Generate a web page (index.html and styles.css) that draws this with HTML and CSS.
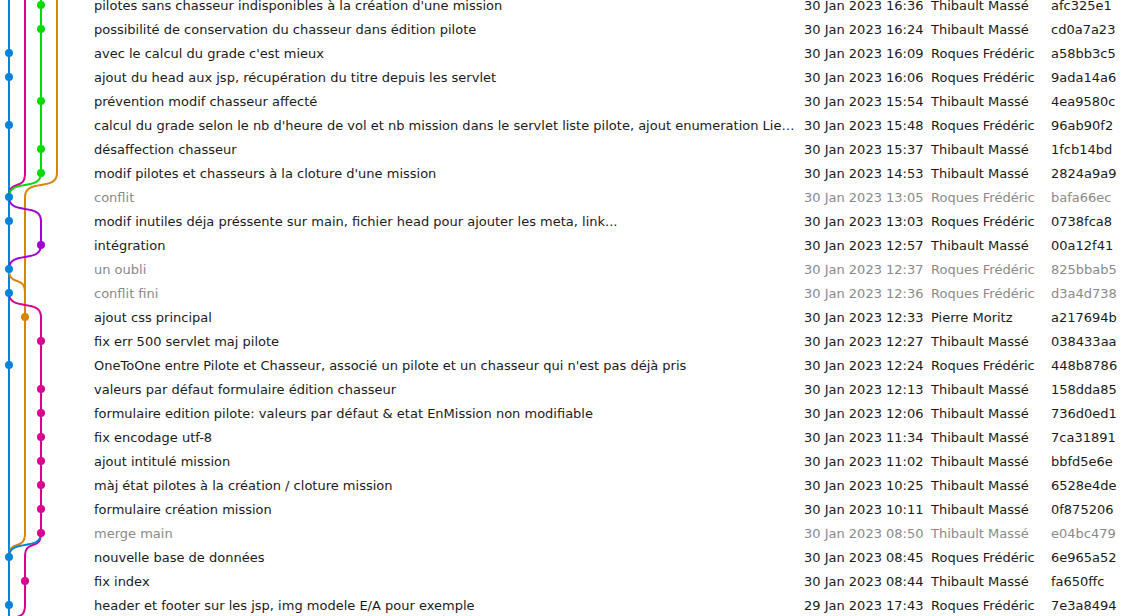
FILE: index.html
```html
<!DOCTYPE html>
<html lang="fr">
<head>
<meta charset="utf-8">
<title>Git Graph</title>
<link rel="stylesheet" href="styles.css">
</head>
<body>
<div class="log">
  <svg class="graph" width="90" height="648" viewBox="0 0 90 648">
    <g class="shadows">
      <path d="M9 0 V648"/>
      <path d="M25 0 V180 C25 199.2 9 184.8 9 204"/>
      <path d="M41 0 V180 C41 199.2 9 184.8 9 204"/>
      <path d="M57 0 V180 C57 199.2 25 184.8 25 204 V540 C25 559.2 9 544.8 9 564"/>
      <path d="M9 204 C9 223.2 41 208.8 41 228 V252 C41 271.2 9 256.8 9 276"/>
      <path d="M9 276 C9 295.2 25 280.8 25 300 V324"/>
      <path d="M9 300 C9 319.2 41 304.8 41 324 V540 C41 559.2 25 544.8 25 564 V612 C25 631.2 9 616.8 9 636"/>
      <path d="M41 540 C41 559.2 9 544.8 9 564"/>
    </g>
    <g class="lines">
      <path class="c-blue" d="M9 0 V648"/>
      <path class="c-magenta" d="M25 0 V180 C25 199.2 9 184.8 9 204"/>
      <path class="c-green" d="M41 0 V180 C41 199.2 9 184.8 9 204"/>
      <path class="c-orange" d="M57 0 V180 C57 199.2 25 184.8 25 204 V540 C25 559.2 9 544.8 9 564"/>
      <path class="c-purple" d="M9 204 C9 223.2 41 208.8 41 228 V252 C41 271.2 9 256.8 9 276"/>
      <path class="c-orange" d="M9 276 C9 295.2 25 280.8 25 300 V324"/>
      <path class="c-magenta" d="M9 300 C9 319.2 41 304.8 41 324 V540 C41 559.2 25 544.8 25 564 V612 C25 631.2 9 616.8 9 636"/>
      <path class="c-blue" d="M41 540 C41 559.2 9 544.8 9 564"/>
    </g>
    <g class="dots">
      <circle class="f-green" cx="41" cy="12" r="4"/>
      <circle class="f-green" cx="41" cy="36" r="4"/>
      <circle class="f-blue" cx="9" cy="60" r="4"/>
      <circle class="f-blue" cx="9" cy="84" r="4"/>
      <circle class="f-green" cx="41" cy="108" r="4"/>
      <circle class="f-blue" cx="9" cy="132" r="4"/>
      <circle class="f-green" cx="41" cy="156" r="4"/>
      <circle class="f-green" cx="41" cy="180" r="4"/>
      <circle class="f-blue" cx="9" cy="204" r="4"/>
      <circle class="f-blue" cx="9" cy="228" r="4"/>
      <circle class="f-purple" cx="41" cy="252" r="4"/>
      <circle class="f-blue" cx="9" cy="276" r="4"/>
      <circle class="f-blue" cx="9" cy="300" r="4"/>
      <circle class="f-orange" cx="25" cy="324" r="4"/>
      <circle class="f-magenta" cx="41" cy="348" r="4"/>
      <circle class="f-blue" cx="9" cy="372" r="4"/>
      <circle class="f-magenta" cx="41" cy="396" r="4"/>
      <circle class="f-magenta" cx="41" cy="420" r="4"/>
      <circle class="f-magenta" cx="41" cy="444" r="4"/>
      <circle class="f-magenta" cx="41" cy="468" r="4"/>
      <circle class="f-magenta" cx="41" cy="492" r="4"/>
      <circle class="f-magenta" cx="41" cy="516" r="4"/>
      <circle class="f-magenta" cx="41" cy="540" r="4"/>
      <circle class="f-blue" cx="9" cy="564" r="4"/>
      <circle class="f-magenta" cx="25" cy="588" r="4"/>
      <circle class="f-blue" cx="9" cy="612" r="4"/>
    </g>
  </svg>
  <div class="rows">
    <div class="row"><span class="cell desc">pilotes sans chasseur indisponibles à la création d'une mission</span><span class="cell date">30 Jan 2023 16:36</span><span class="cell author">Thibault Massé</span><span class="cell hash">afc325e1</span></div>
    <div class="row"><span class="cell desc">possibilité de conservation du chasseur dans édition pilote</span><span class="cell date">30 Jan 2023 16:24</span><span class="cell author">Thibault Massé</span><span class="cell hash">cd0a7a23</span></div>
    <div class="row"><span class="cell desc">avec le calcul du grade c'est mieux</span><span class="cell date">30 Jan 2023 16:09</span><span class="cell author">Roques Frédéric</span><span class="cell hash">a58bb3c5</span></div>
    <div class="row"><span class="cell desc">ajout du head aux jsp, récupération du titre depuis les servlet</span><span class="cell date">30 Jan 2023 16:06</span><span class="cell author">Roques Frédéric</span><span class="cell hash">9ada14a6</span></div>
    <div class="row"><span class="cell desc">prévention modif chasseur affecté</span><span class="cell date">30 Jan 2023 15:54</span><span class="cell author">Thibault Massé</span><span class="cell hash">4ea9580c</span></div>
    <div class="row"><span class="cell desc">calcul du grade selon le nb d'heure de vol et nb mission dans le servlet liste pilote, ajout enumeration LieuMission</span><span class="cell date">30 Jan 2023 15:48</span><span class="cell author">Roques Frédéric</span><span class="cell hash">96ab90f2</span></div>
    <div class="row"><span class="cell desc">désaffection chasseur</span><span class="cell date">30 Jan 2023 15:37</span><span class="cell author">Thibault Massé</span><span class="cell hash">1fcb14bd</span></div>
    <div class="row"><span class="cell desc">modif pilotes et chasseurs à la cloture d'une mission</span><span class="cell date">30 Jan 2023 14:53</span><span class="cell author">Thibault Massé</span><span class="cell hash">2824a9a9</span></div>
    <div class="row muted"><span class="cell desc">conflit</span><span class="cell date">30 Jan 2023 13:05</span><span class="cell author">Roques Frédéric</span><span class="cell hash">bafa66ec</span></div>
    <div class="row"><span class="cell desc">modif inutiles déja préssente sur main, fichier head pour ajouter les meta, link...</span><span class="cell date">30 Jan 2023 13:03</span><span class="cell author">Roques Frédéric</span><span class="cell hash">0738fca8</span></div>
    <div class="row"><span class="cell desc">intégration</span><span class="cell date">30 Jan 2023 12:57</span><span class="cell author">Thibault Massé</span><span class="cell hash">00a12f41</span></div>
    <div class="row muted"><span class="cell desc">un oubli</span><span class="cell date">30 Jan 2023 12:37</span><span class="cell author">Roques Frédéric</span><span class="cell hash">825bbab5</span></div>
    <div class="row muted"><span class="cell desc">conflit fini</span><span class="cell date">30 Jan 2023 12:36</span><span class="cell author">Roques Frédéric</span><span class="cell hash">d3a4d738</span></div>
    <div class="row"><span class="cell desc">ajout css principal</span><span class="cell date">30 Jan 2023 12:33</span><span class="cell author">Pierre Moritz</span><span class="cell hash">a217694b</span></div>
    <div class="row"><span class="cell desc">fix err 500 servlet maj pilote</span><span class="cell date">30 Jan 2023 12:27</span><span class="cell author">Thibault Massé</span><span class="cell hash">038433aa</span></div>
    <div class="row"><span class="cell desc">OneToOne entre Pilote et Chasseur, associé un pilote et un chasseur qui n'est pas déjà pris</span><span class="cell date">30 Jan 2023 12:24</span><span class="cell author">Roques Frédéric</span><span class="cell hash">448b8786</span></div>
    <div class="row"><span class="cell desc">valeurs par défaut formulaire édition chasseur</span><span class="cell date">30 Jan 2023 12:13</span><span class="cell author">Thibault Massé</span><span class="cell hash">158dda85</span></div>
    <div class="row"><span class="cell desc">formulaire edition pilote: valeurs par défaut &amp; etat EnMission non modifiable</span><span class="cell date">30 Jan 2023 12:06</span><span class="cell author">Thibault Massé</span><span class="cell hash">736d0ed1</span></div>
    <div class="row"><span class="cell desc">fix encodage utf-8</span><span class="cell date">30 Jan 2023 11:34</span><span class="cell author">Thibault Massé</span><span class="cell hash">7ca31891</span></div>
    <div class="row"><span class="cell desc">ajout intitulé mission</span><span class="cell date">30 Jan 2023 11:02</span><span class="cell author">Thibault Massé</span><span class="cell hash">bbfd5e6e</span></div>
    <div class="row"><span class="cell desc">màj état pilotes à la création / cloture mission</span><span class="cell date">30 Jan 2023 10:25</span><span class="cell author">Thibault Massé</span><span class="cell hash">6528e4de</span></div>
    <div class="row"><span class="cell desc">formulaire création mission</span><span class="cell date">30 Jan 2023 10:11</span><span class="cell author">Thibault Massé</span><span class="cell hash">0f875206</span></div>
    <div class="row muted"><span class="cell desc">merge main</span><span class="cell date">30 Jan 2023 08:50</span><span class="cell author">Thibault Massé</span><span class="cell hash">e04bc479</span></div>
    <div class="row"><span class="cell desc">nouvelle base de données</span><span class="cell date">30 Jan 2023 08:45</span><span class="cell author">Roques Frédéric</span><span class="cell hash">6e965a52</span></div>
    <div class="row"><span class="cell desc">fix index</span><span class="cell date">30 Jan 2023 08:44</span><span class="cell author">Thibault Massé</span><span class="cell hash">fa650ffc</span></div>
    <div class="row"><span class="cell desc">header et footer sur les jsp, img modele E/A pour exemple</span><span class="cell date">29 Jan 2023 17:43</span><span class="cell author">Roques Frédéric</span><span class="cell hash">7e3a8494</span></div>
  </div>
</div>
</body>
</html>
```

FILE: styles.css
```css
html, body {
  margin: 0;
  padding: 0;
  background: #ffffff;
  overflow: hidden;
  height: 616px;
}

body {
  font-family: "DejaVu Sans", "Liberation Sans", sans-serif;
  font-size: 13px;
  color: #1a1a1a;
}

.log {
  display: flex;
  align-items: flex-start;
  margin-top: -6px;
}

.graph {
  flex: 0 0 90px;
  display: block;
  margin-top: -1px;
}

.shadows path {
  fill: none;
  stroke: #ffffff;
  stroke-width: 4;
  stroke-opacity: 0.75;
}

.lines path {
  fill: none;
  stroke-width: 2;
}

.dots circle {
  stroke: none;
}

.c-blue { stroke: #0085d9; }
.c-magenta { stroke: #d9008f; }
.c-green { stroke: #00d90a; }
.c-orange { stroke: #d98500; }
.c-purple { stroke: #a300d9; }

.f-blue { fill: #0085d9; }
.f-magenta { fill: #d9008f; }
.f-green { fill: #00d90a; }
.f-orange { fill: #d98500; }
.f-purple { fill: #a300d9; }

.rows {
  flex: 1 1 auto;
  min-width: 0;
}

.row {
  display: grid;
  grid-template-columns: 710px 127px 120px 1fr;
  height: 24px;
  line-height: 24px;
}

.cell {
  padding: 0 0 0 4px;
  white-space: nowrap;
}

.desc {
  padding-right: 4px;
  overflow: hidden;
  text-overflow: ellipsis;
}

.muted {
  color: #8a8a8a;
}
```
